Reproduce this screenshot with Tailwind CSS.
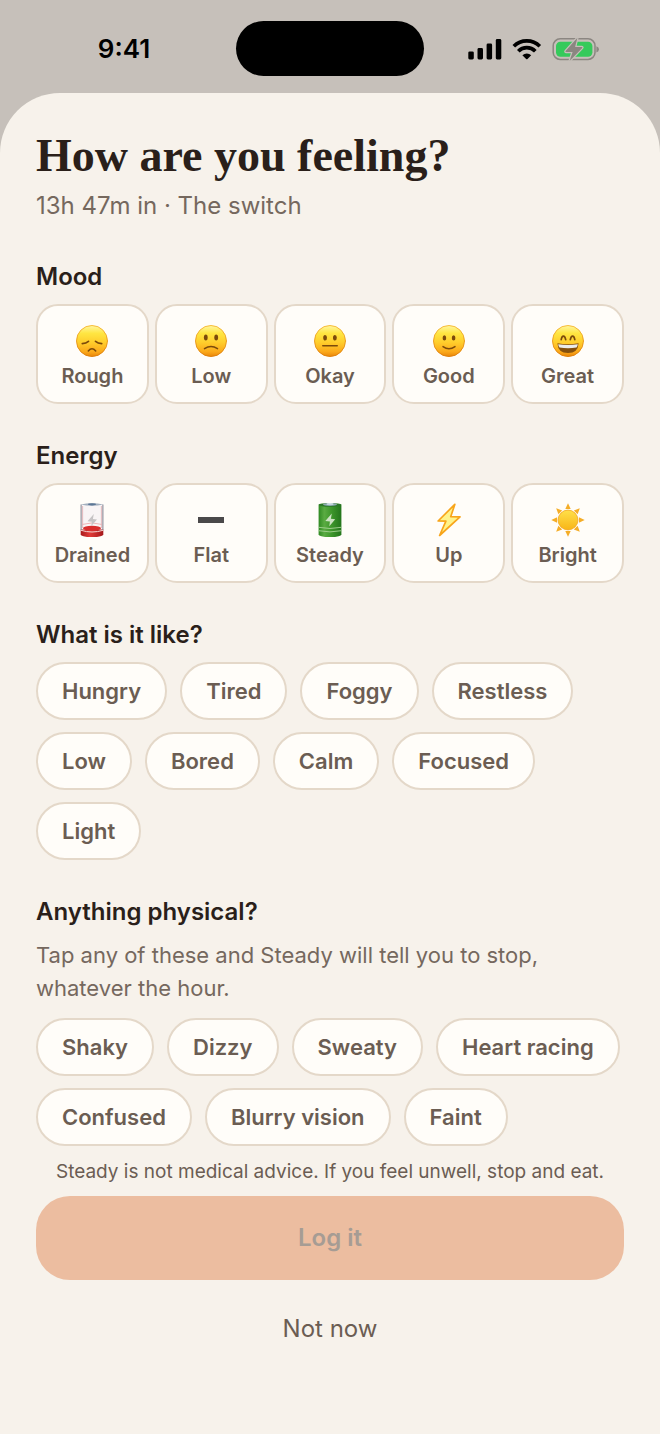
<!DOCTYPE html>
<html lang="en">
<head>
  <meta charset="utf-8" />
  <meta name="viewport" content="width=device-width, initial-scale=1.0" />
  <title>How are you feeling?</title>
  <script src="https://cdn.jsdelivr.net/npm/@tailwindcss/browser@4"></script>
</head>
<body class="bg-[#c6c0ba] text-[#2a1f1a] font-['Inter',sans-serif] antialiased">
  <!-- shared gradients and the face background -->
  <svg class="absolute w-0 h-0" aria-hidden="true">
    <defs>
      <linearGradient id="face-fill" x1="0" y1="0" x2="0" y2="1">
        <stop offset="0" stop-color="#fff6a0" />
        <stop offset=".25" stop-color="#ffe642" />
        <stop offset=".55" stop-color="#ffcd2c" />
        <stop offset=".85" stop-color="#fba81a" />
        <stop offset="1" stop-color="#e98508" />
      </linearGradient>
      <linearGradient id="face-edge" x1="0" y1="0" x2="0" y2="1">
        <stop offset="0" stop-color="#f7bd3c" />
        <stop offset="1" stop-color="#df7f0b" />
      </linearGradient>
      <linearGradient id="sun-fill" x1="0" y1="0" x2="0" y2="1">
        <stop offset="0" stop-color="#ffe04a" />
        <stop offset="1" stop-color="#f8b517" />
      </linearGradient>
      <linearGradient id="green-fill" x1="0" y1="0" x2="1" y2="0">
        <stop offset="0" stop-color="#2f8a22" />
        <stop offset=".25" stop-color="#5aab42" />
        <stop offset=".55" stop-color="#3f982c" />
        <stop offset="1" stop-color="#23751b" />
      </linearGradient>
      <linearGradient id="red-fill" x1="0" y1="0" x2="1" y2="0">
        <stop offset="0" stop-color="#a91a1c" />
        <stop offset=".4" stop-color="#e03a37" />
        <stop offset="1" stop-color="#a5181b" />
      </linearGradient>
      <g id="face">
        <circle cx="18" cy="18" r="15.5" fill="url(#face-fill)" stroke="url(#face-edge)" />
      </g>
    </defs>
  </svg>

  <div class="min-h-screen flex flex-col">
    <header class="grid grid-cols-[1fr_188px_1fr] items-center pt-[21px] pb-[17px]">
      <div class="pl-3 text-center text-[26px] leading-8 font-semibold text-black">9:41</div>
      <div class="h-[55px] rounded-full bg-black"></div>
      <div class="pr-4 flex justify-center">
        <svg class="w-[132px] h-6" viewBox="468 36 132 24" role="img" aria-label="Signal, Wi-Fi, battery charging">
          <rect x="468.3" y="50.4" width="5.5" height="8" rx="1.4" />
          <rect x="477.5" y="47" width="5.5" height="11.4" rx="1.4" />
          <rect x="486.6" y="42.6" width="5.5" height="15.8" rx="1.4" />
          <rect x="495.8" y="38" width="5.5" height="20.4" rx="1.4" />
          <g fill="none" stroke="#000" stroke-width="3.7">
            <path d="M513.8 45.2a18.4 18.4 0 0 1 26 0" />
            <path d="M518.3 50.2a12 12 0 0 1 17 0" />
          </g>
          <path d="M522.4 54.3a6.3 6.3 0 0 1 8.8 0l-3.7 3.7a1 1 0 0 1-1.4 0z" />
          <rect x="553.2" y="37.8" width="41.8" height="20.6" rx="7" fill="none" stroke="#8b8681" stroke-width="1.5" />
          <path d="M596.4 45.2q2.6 .9 2.6 3.1t-2.6 3.1z" fill="#8b8681" />
          <rect x="556" y="40.7" width="36.4" height="15" rx="4.4" fill="#35ca5b" />
          <path d="M577.4 36.8 565.6 50q-.6 1 .5 1h6.5l-3 9 12.6-13q.6-1-.5-1h-6.6z" fill="#8b8681" stroke="#c6c0ba" stroke-width="2.4" paint-order="stroke" stroke-linejoin="round" />
        </svg>
      </div>
    </header>

    <main class="grow rounded-t-[60px] bg-[#f7f2eb] px-9 pt-[37px] pb-16">
      <h1 class="font-['Liberation_Serif',serif] text-[46px] leading-[52px] font-bold">How are you feeling?</h1>
      <p class="mt-2 text-2xl leading-8 text-[#75685e]">13h 47m in · The switch</p>

      <section class="mt-[38px]" aria-labelledby="mood">
        <h2 id="mood" class="text-2xl leading-[34px] font-semibold">Mood</h2>
        <div class="mt-[10px] grid grid-cols-5 gap-[6px] text-xl leading-6 font-semibold text-[#6b5d53]">
          <button type="button" aria-pressed="false" class="h-[100px] pt-[2px] flex flex-col items-center justify-center gap-[5px] rounded-[22px] border-2 border-[#e4d8c9] bg-[#fffdf9]">
            <svg class="size-9" viewBox="0 0 36 36" fill="none" stroke="#7b4a0b" stroke-linecap="round" aria-hidden="true">
              <use href="#face" stroke="none" />
              <path d="M8.3 20.7q3.8-.3 6.2-2.3M27.7 20.7q-3.8-.3-6.2-2.3" stroke-width="1.7" />
              <path d="M14.3 28q3.7-4.4 7.4 0" stroke-width="1.6" />
            </svg>
            Rough
          </button>
          <button type="button" aria-pressed="false" class="h-[100px] pt-[2px] flex flex-col items-center justify-center gap-[5px] rounded-[22px] border-2 border-[#e4d8c9] bg-[#fffdf9]">
            <svg class="size-9" viewBox="0 0 36 36" fill="none" stroke="#7b4a0b" stroke-linecap="round" aria-hidden="true">
              <use href="#face" stroke="none" />
              <g fill="#7b4a0b" stroke="none"><ellipse cx="12.8" cy="14.5" rx="1.9" ry="2.9" /><ellipse cx="23.2" cy="14.5" rx="1.9" ry="2.9" /></g>
              <path d="M11.5 25.7q6.5-4.4 13 0" stroke-width="1.5" />
            </svg>
            Low
          </button>
          <button type="button" aria-pressed="false" class="h-[100px] pt-[2px] flex flex-col items-center justify-center gap-[5px] rounded-[22px] border-2 border-[#e4d8c9] bg-[#fffdf9]">
            <svg class="size-9" viewBox="0 0 36 36" fill="none" stroke="#7b4a0b" stroke-linecap="round" aria-hidden="true">
              <use href="#face" stroke="none" />
              <g fill="#7b4a0b" stroke="none"><ellipse cx="13.1" cy="14.8" rx="1.9" ry="2.8" /><ellipse cx="22.9" cy="14.8" rx="1.9" ry="2.8" /></g>
              <path d="M10.8 22.8h14.4" stroke-width="1.6" />
            </svg>
            Okay
          </button>
          <button type="button" aria-pressed="false" class="h-[100px] pt-[2px] flex flex-col items-center justify-center gap-[5px] rounded-[22px] border-2 border-[#e4d8c9] bg-[#fffdf9]">
            <svg class="size-9" viewBox="0 0 36 36" fill="none" stroke="#7b4a0b" stroke-linecap="round" aria-hidden="true">
              <use href="#face" stroke="none" />
              <g fill="#7b4a0b" stroke="none"><ellipse cx="13.4" cy="14.9" rx="1.8" ry="2.7" /><ellipse cx="22.6" cy="14.9" rx="1.8" ry="2.7" /></g>
              <path d="M12 23.6q6 4.4 12 0" stroke-width="1.5" />
            </svg>
            Good
          </button>
          <button type="button" aria-pressed="false" class="h-[100px] pt-[2px] flex flex-col items-center justify-center gap-[5px] rounded-[22px] border-2 border-[#e4d8c9] bg-[#fffdf9]">
            <svg class="size-9" viewBox="0 0 36 36" fill="none" stroke="#7b4a0b" stroke-linecap="round" aria-hidden="true">
              <use href="#face" stroke="none" />
              <path d="M11.2 16.7q.6-3.6 2.2-3.6t2.3 3.6M20.3 16.7q.7-3.6 2.3-3.6t2.2 3.6" stroke-width="1.7" />
              <path d="M7.4 20.3q10.6 1.7 21.2 0-.6 9.8-10.6 9.8T7.4 20.3z" fill="#85500d" stroke="none" />
              <path d="M8.2 21.2q9.800 1.500 19.600 0-.2 2-1.300 3.300-8.500 1.300-17 0-1.100-1.300-1.300-3.300z" fill="#ececea" stroke="none" />
            </svg>
            Great
          </button>
        </div>
      </section>

      <section class="mt-[35px]" aria-labelledby="energy">
        <h2 id="energy" class="text-2xl leading-[34px] font-semibold">Energy</h2>
        <div class="mt-[10px] grid grid-cols-5 gap-[6px] text-xl leading-6 font-semibold text-[#6b5d53]">
          <button type="button" aria-pressed="false" class="h-[100px] pt-[2px] flex flex-col items-center justify-center gap-[5px] rounded-[22px] border-2 border-[#e4d8c9] bg-[#fffdf9]">
            <svg class="size-9" viewBox="0 0 36 36" aria-hidden="true">
              <path d="M6.700 2.500v29.500q0 2.800 11.300 2.800T29.300 32V2.500z" fill="#f8f4f5" />
              <path d="M6.700 27.500v4.700q0 2.800 11.300 2.800t11.300-2.800v-4.700z" fill="url(#red-fill)" />
              <ellipse cx="18" cy="26.300" rx="9" ry="2.500" fill="#d92d2d" />
              <path d="M7 28.300q11 3.400 22 0" fill="none" stroke="#f5d3d1" stroke-width="1" />
              <path d="M8.500 22.400q9.500-3 19 0" fill="none" stroke="#eba5a7" stroke-width=".8" />
              <path d="M7.100 2.500v25.500M28.900 2.500v25.500" stroke="#81818e" stroke-width="1" />
              <path d="M8.600 4v22M27.400 4v22" stroke="#dba0a6" stroke-width=".7" />
              <path d="M6.700 2.500q11.300-2.400 22.600 0-11.300 2.400-22.600 0z" fill="#a3afbf" />
              <ellipse cx="18" cy="2.300" rx="4" ry="1.100" fill="#5c7796" />
              <path d="m19.800 12-6.300 7.200 4.400.6-.6 4.200 5.700-6.500-4.100-.6z" fill="#c6c3c5" />
            </svg>
            Drained
          </button>
          <button type="button" aria-pressed="false" class="h-[100px] pt-[2px] flex flex-col items-center justify-center gap-[5px] rounded-[22px] border-2 border-[#e4d8c9] bg-[#fffdf9]">
            <svg class="size-9" viewBox="0 0 36 36" aria-hidden="true">
              <path d="M5 15h26v6H5z" fill="#4a494a" />
            </svg>
            Flat
          </button>
          <button type="button" aria-pressed="false" class="h-[100px] pt-[2px] flex flex-col items-center justify-center gap-[5px] rounded-[22px] border-2 border-[#e4d8c9] bg-[#fffdf9]">
            <svg class="size-9" viewBox="0 0 36 36" aria-hidden="true">
              <path d="M6.600 2.500v29.700q0 2.800 11.400 2.800t11.400-2.800V2.500z" fill="url(#green-fill)" />
              <ellipse cx="18" cy="2.800" rx="11.300" ry="1.900" fill="#2c7727" />
              <ellipse cx="18" cy="2.500" rx="7" ry="1.400" fill="#8daab2" />
              <ellipse cx="18" cy="1.900" rx="3.500" ry=".9" fill="#d5e1e8" />
              <path d="M6.700 25.300q11.300 2.400 22.600 0M6.700 28.700q11.300 2.400 22.600 0" fill="none" stroke="#a6d294" stroke-width=".9" />
              <path d="m19.800 11.500-6.500 7.500 4.600.6-.6 4.600 5.900-6.900-4.300-.6z" fill="#cce2c3" />
            </svg>
            Steady
          </button>
          <button type="button" aria-pressed="false" class="h-[100px] pt-[2px] flex flex-col items-center justify-center gap-[5px] rounded-[22px] border-2 border-[#e4d8c9] bg-[#fffdf9]">
            <svg class="size-9" viewBox="0 0 36 36" aria-hidden="true">
              <path d="M23.800 2.400 7.100 19l7.800.2-6.300 14.300L29 14.900l-9.300-.2z" fill="#fff38a" stroke="#f8a51b" stroke-width="1.700" stroke-linejoin="round" />
            </svg>
            Up
          </button>
          <button type="button" aria-pressed="false" class="h-[100px] pt-[2px] flex flex-col items-center justify-center gap-[5px] rounded-[22px] border-2 border-[#e4d8c9] bg-[#fffdf9]">
            <svg class="size-9" viewBox="0 0 36 36" aria-hidden="true">
              <g fill="#f5ad27">
                <path d="m18 1.300 2.700 5.800h-5.400z" />
                <path d="m18 1.300 2.700 5.800h-5.400z" transform="rotate(45 18 18)" />
                <path d="m18 1.300 2.700 5.800h-5.400z" transform="rotate(90 18 18)" />
                <path d="m18 1.300 2.700 5.800h-5.400z" transform="rotate(135 18 18)" />
                <path d="m18 1.300 2.700 5.800h-5.400z" transform="rotate(180 18 18)" />
                <path d="m18 1.300 2.700 5.800h-5.400z" transform="rotate(225 18 18)" />
                <path d="m18 1.300 2.700 5.800h-5.400z" transform="rotate(270 18 18)" />
                <path d="m18 1.300 2.700 5.800h-5.400z" transform="rotate(315 18 18)" />
              </g>
              <circle cx="18" cy="18" r="9.900" fill="url(#sun-fill)" stroke="#f2a61c" stroke-width=".8" />
            </svg>
            Bright
          </button>
        </div>
      </section>

      <section class="mt-[35px]" aria-labelledby="like">
        <h2 id="like" class="text-2xl leading-[34px] font-semibold">What is it like?</h2>
        <div class="mt-[10px] flex flex-wrap gap-x-[13px] gap-y-3 text-[22px] leading-8 font-semibold text-[#6b5d53]">
          <button type="button" aria-pressed="false" class="h-[58px] px-6 rounded-full border-2 border-[#e4d8c9] bg-[#fffdf9]">Hungry</button>
          <button type="button" aria-pressed="false" class="h-[58px] px-6 rounded-full border-2 border-[#e4d8c9] bg-[#fffdf9]">Tired</button>
          <button type="button" aria-pressed="false" class="h-[58px] px-6 rounded-full border-2 border-[#e4d8c9] bg-[#fffdf9]">Foggy</button>
          <button type="button" aria-pressed="false" class="h-[58px] px-6 rounded-full border-2 border-[#e4d8c9] bg-[#fffdf9]">Restless</button>
          <button type="button" aria-pressed="false" class="h-[58px] px-6 rounded-full border-2 border-[#e4d8c9] bg-[#fffdf9]">Low</button>
          <button type="button" aria-pressed="false" class="h-[58px] px-6 rounded-full border-2 border-[#e4d8c9] bg-[#fffdf9]">Bored</button>
          <button type="button" aria-pressed="false" class="h-[58px] px-6 rounded-full border-2 border-[#e4d8c9] bg-[#fffdf9]">Calm</button>
          <button type="button" aria-pressed="false" class="h-[58px] px-6 rounded-full border-2 border-[#e4d8c9] bg-[#fffdf9]">Focused</button>
          <button type="button" aria-pressed="false" class="h-[58px] px-6 rounded-full border-2 border-[#e4d8c9] bg-[#fffdf9]">Light</button>
        </div>
      </section>

      <section class="mt-[35px]" aria-labelledby="physical">
        <h2 id="physical" class="text-2xl leading-[34px] font-semibold">Anything physical?</h2>
        <p class="mt-[10px] max-w-[540px] text-[22px] leading-[33px] text-[#75685e]">Tap any of these and Steady will tell you to stop, whatever the hour.</p>
        <div class="mt-[13px] flex flex-wrap gap-x-[13px] gap-y-3 text-[22px] leading-8 font-semibold text-[#6b5d53]">
          <button type="button" aria-pressed="false" class="h-[58px] px-6 rounded-full border-2 border-[#e4d8c9] bg-[#fffdf9]">Shaky</button>
          <button type="button" aria-pressed="false" class="h-[58px] px-6 rounded-full border-2 border-[#e4d8c9] bg-[#fffdf9]">Dizzy</button>
          <button type="button" aria-pressed="false" class="h-[58px] px-6 rounded-full border-2 border-[#e4d8c9] bg-[#fffdf9]">Sweaty</button>
          <button type="button" aria-pressed="false" class="h-[58px] px-6 rounded-full border-2 border-[#e4d8c9] bg-[#fffdf9]">Heart racing</button>
          <button type="button" aria-pressed="false" class="h-[58px] px-6 rounded-full border-2 border-[#e4d8c9] bg-[#fffdf9]">Confused</button>
          <button type="button" aria-pressed="false" class="h-[58px] px-6 rounded-full border-2 border-[#e4d8c9] bg-[#fffdf9]">Blurry vision</button>
          <button type="button" aria-pressed="false" class="h-[58px] px-6 rounded-full border-2 border-[#e4d8c9] bg-[#fffdf9]">Faint</button>
        </div>
      </section>

      <p class="mt-[14px] text-center text-[19px] leading-6 text-[#6b5d53]">Steady is not medical advice. If you feel unwell, stop and eat.</p>
      <button type="button" disabled class="mt-3 w-full h-[84px] rounded-[34px] bg-[#ecbda0] text-2xl leading-8 font-semibold text-[#a69c94]">Log it</button>
      <button type="button" class="mt-5 w-full h-[58px] text-2xl leading-8 text-[#6b5d53]">Not now</button>
    </main>
  </div>
</body>
</html>
